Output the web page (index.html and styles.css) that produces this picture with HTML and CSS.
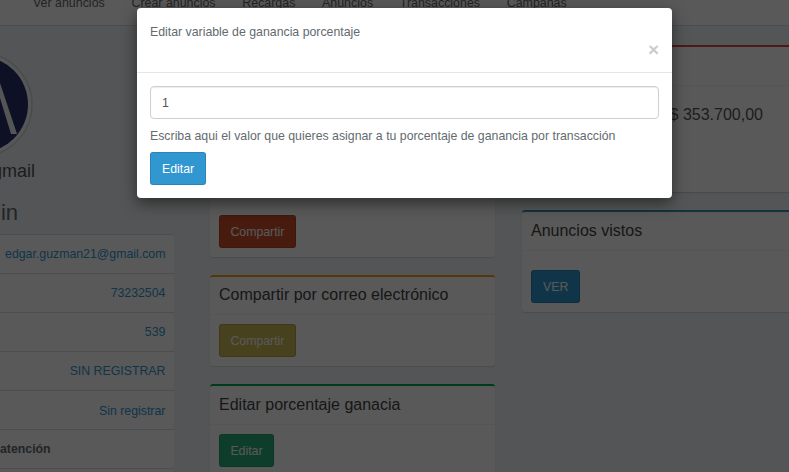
FILE: index.html
```html
<!DOCTYPE html>
<html lang="es">
<head>
<meta charset="utf-8">
<title>Perfil</title>
<link rel="stylesheet" href="styles.css">
</head>
<body>
<div class="page">
  <nav class="nav"><a>Ver anuncios</a><a>Crear anuncios</a><a>Recargas</a><a>Anuncios</a><a>Transacciones</a><a>Campañas</a></nav>
  <main class="content">
    <aside class="profile">
      <svg class="avatar" width="33" height="100" viewBox="0 0 33 100">
        <circle cx="-20" cy="49.5" r="52" fill="#f5f8fa" stroke="#d2d6de" stroke-width="1.5"/>
        <circle cx="-20" cy="49.5" r="48" fill="#28306a"/>
        <path d="M-2 22L0 28L17 79H11L0 43L-2 36Z" fill="#f4f4f4"/>
      </svg>
      <div class="name"><span>edgar.guzman21@gmail</span></div>
      <div class="role"><span>Admin</span></div>
      <ul class="details">
        <li>edgar.guzman21@gmail.com</li><li>73232504</li><li>539</li><li>SIN REGISTRAR</li><li class="low">Sin registrar</li>
        <li class="label">atención</li><li></li>
      </ul>
    </aside>
    <section class="column middle">
      <div class="card share"><div class="head"></div><div class="body"><button class="btn red">Compartir</button></div></div>
      <div class="card orange"><div class="head">Compartir por correo electrónico</div><div class="body"><button class="btn yellow">Compartir</button></div></div>
      <div class="card greenline"><div class="head taller">Editar porcentaje ganacia</div><div class="body"><button class="btn green">Editar</button></div></div>
    </section>
    <section class="column right">
      <div class="card balance"><div class="head"></div><div class="amount">$ 353.700,00</div></div>
      <div class="card views"><div class="head taller">Anuncios vistos</div><div class="body spaced"><button class="btn blue">VER</button></div></div>
    </section>
  </main>
</div>
<div class="backdrop"></div>
<div class="modal">
  <div class="modal-head"><div>Editar variable de ganancia porcentaje</div><span class="close">×</span></div>
  <div class="modal-body">
    <input class="field" value="1">
    <p>Escriba aqui el valor que quieres asignar a tu porcentaje de ganancia por transacción</p>
    <button class="btn blue">Editar</button>
  </div>
</div>
</body>
</html>
```
FILE: styles.css
```css
* { box-sizing: border-box; }
body {
  margin: 0;
  height: 472px;
  overflow: hidden;
  background: #f0f3f7;
  font: 12.32px/18px "Liberation Sans", Arial, sans-serif;
  color: #636b6f;
}
.page { height: 472px; overflow: hidden; }
.nav {
  display: flex;
  gap: 26.7px;
  height: 26px;
  padding-left: 33px;
  background: #fff;
  border-bottom: 1px solid #d3e0e9;
  font-size: 12.42px;
}
.nav a { margin-top: -6px; color: #666; }
.content {
  display: grid;
  grid-template-columns: 174px 285px 267px;
  column-gap: 36px;
  height: 446px;
}
.right { margin-left: -9px; width: 276px; }
.profile { padding-top: 29px; }
.avatar { display: block; }
.name, .role { display: flex; justify-content: flex-end; }
.name { width: 35px; height: 30px; margin-top: 5px; font-size: 18px; line-height: 22px; color: #555; }
.role { width: 18px; font-size: 22px; line-height: 26px; height: 26px; margin-top: 10px; color: #636b6f; }
.details {
  margin: 8px 0 0;
  padding: 0;
  list-style: none;
  background: #fff;
  border-top: 1px solid #d3e0e9;
  border-radius: 0 4px 0 0;
}
.details li {
  height: 39px;
  padding: 10px 8.6px 0 0;
  text-align: right;
  color: #3097d1;
  border-bottom: 1px solid #d3e0e9;
}
.details .low { padding-top: 11px; }
.details .label { text-align: left; font-weight: bold; color: #636b6f; }
.column { padding-top: 19px; }
.card {
  background: #fff;
  border-top: 2px solid #dd4b39;
  border-radius: 3px;
  box-shadow: 0 1px 1px rgba(0, 0, 0, .12);
  margin-bottom: 18px;
}
.head {
  height: 38px;
  padding: 7px 9px;
  font-size: 16px;
  line-height: 22px;
  color: #444;
  border-bottom: 1px solid #f4f4f4;
}
.taller { height: 39px; padding-top: 8px; }
.body { padding: 9px; }
.spaced { padding-top: 19px; }
.share .head { height: 159px; }
.share { border-color: #dd4b39; }
.orange { border-color: #f39c12; }
.greenline { border-color: #00a65a; }
.views { border-color: #3c8dbc; }
.balance { height: 147px; border-radius: 0; }
.balance .head { height: 39px; }
.amount { padding: 18px 35px 0 0; font-size: 16px; line-height: 22px; text-align: right; color: #555; }
.btn {
  display: block;
  height: 33px;
  padding: 0 11px;
  border: 1px solid rgba(0, 0, 0, .12);
  border-radius: 3px;
  font: inherit;
  color: #fff;
}
.card .btn { padding: 0 10.4px; }
.views .btn { padding: 0 11px; }
.red { background: #cb5128; }
.yellow { background: #cbb956; }
.green { background: #2ab27b; }
.blue { background: #3097d1; }
.backdrop { position: absolute; inset: 0; background: rgba(0, 0, 0, .65); }
.modal {
  position: absolute;
  left: 137px;
  top: 8px;
  width: 535px;
  height: 190px;
  background: #fff;
  border-radius: 4px;
  box-shadow: 0 5px 15px rgba(0, 0, 0, .5);
}
.modal-head {
  height: 65px;
  padding: 15px 13px 0;
  border-bottom: 1px solid #e5e5e5;
}
.close {
  display: block;
  text-align: right;
  font-size: 19px;
  line-height: 18px;
  font-weight: bold;
  color: #ccc;
}
.modal-body { padding: 13px; }
.field {
  display: block;
  width: 509px;
  height: 33px;
  padding: 0 11px;
  border: 1px solid #ccd0d2;
  border-radius: 4px;
  box-shadow: inset 0 1px 1px rgba(0, 0, 0, .075);
  font: inherit;
  color: #555;
}
.modal-body p { margin: 8px 0 7px; }
```
